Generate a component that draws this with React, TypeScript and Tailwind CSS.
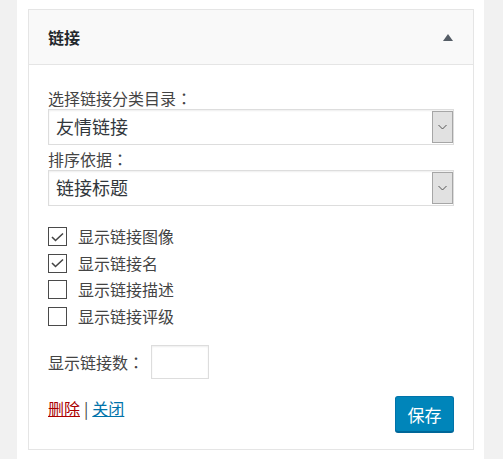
const font = "font-['Microsoft_YaHei','Noto_Sans_CJK_SC',sans-serif]";

function Colon() {
  return <span className="font-['Noto_Sans_CJK_TC',sans-serif]">：</span>;
}

function FakeSelect({ value }: { value: string }) {
  return (
    <div className="flex h-[36px] w-full items-stretch border border-[#dddddd] bg-white shadow-[inset_0_1px_2px_rgba(0,0,0,0.07)]">
      <span className="flex-1 pl-[7px] text-[18px] leading-[33px] text-[#32373c]">{value}</span>
      <span className="my-[1px] flex w-[21px] items-center justify-center border border-[#a6a6a6] bg-[#e1e1e1]">
        <svg width="9" height="6" viewBox="0 0 9 6">
          <path d="M0.5 1 L4.5 5 L8.5 1" fill="none" stroke="#555" strokeWidth="1" />
        </svg>
      </span>
    </div>
  );
}

function CheckRow({ label, checked }: { label: string; checked: boolean }) {
  return (
    <div className="flex h-[26.6px] items-start">
      <span className="flex h-[19px] w-[19px] items-center justify-center border border-[#4a4a4a] bg-white">
        {checked && (
          <svg width="13" height="10" viewBox="0 0 13 10">
            <path d="M1 5 L4.5 8.5 L12 1.5" fill="none" stroke="#444" strokeWidth="1.6" />
          </svg>
        )}
      </span>
      <span className="ml-[11px] text-[16px] leading-[19px] text-[#444]">{label}</span>
    </div>
  );
}

export default function App() {
  return (
    <div className={`flex h-[459px] w-[503px] bg-[#f1f1f1] ${font}`}>
      <div className="ml-[17px] w-[467px] bg-white pl-[11px] pr-[10px] pt-[9px]">
        <div className="border border-[#e5e5e5]">
          <div className="flex h-[55px] items-center justify-between border-b border-[#e5e5e5] bg-[#f9f9f9] pl-[19px] pr-[20px]">
            <h3 className="text-[16px] font-bold text-[#23282d]">链接</h3>
            <svg width="10" height="7" viewBox="0 0 10 7">
              <path d="M5 0 L10 7 L0 7 Z" fill="#555d66" />
            </svg>
          </div>
          <div className="px-[19px] pb-[17px] pt-[22px] text-[#444]">
            <p className="text-[16px] leading-[22px]">
              选择链接分类目录<Colon />
            </p>
            <FakeSelect value="友情链接" />
            <p className="mt-[4px] text-[16px] leading-[21px]">
              排序依据<Colon />
            </p>
            <FakeSelect value="链接标题" />
            <div className="mt-[21px]">
              <CheckRow label="显示链接图像" checked />
              <CheckRow label="显示链接名" checked />
              <CheckRow label="显示链接描述" checked={false} />
              <CheckRow label="显示链接评级" checked={false} />
            </div>
            <div className="mt-[12px] flex items-center">
              <span className="text-[16px]">
                显示链接数<Colon />
              </span>
              <span className="ml-[7px] h-[34px] w-[58px] border border-[#dddddd] bg-white shadow-[inset_0_1px_2px_rgba(0,0,0,0.07)]" />
            </div>
            <div className="mt-[17px] flex items-start justify-between">
              <div className="mt-[2px] text-[16px] leading-[20px]">
                <a className="text-[#a00] underline">删除</a>
                <span className="mx-[4px] text-[#444]">|</span>
                <a className="text-[#0073aa] underline">关闭</a>
              </div>
              <button className="h-[36px] w-[59px] rounded-[3px] border border-[#0073aa] border-b-[#006799] bg-[#0085ba] text-[17px] text-white shadow-[0_1px_0_#006799]">
                保存
              </button>
            </div>
          </div>
        </div>
      </div>
    </div>
  );
}
